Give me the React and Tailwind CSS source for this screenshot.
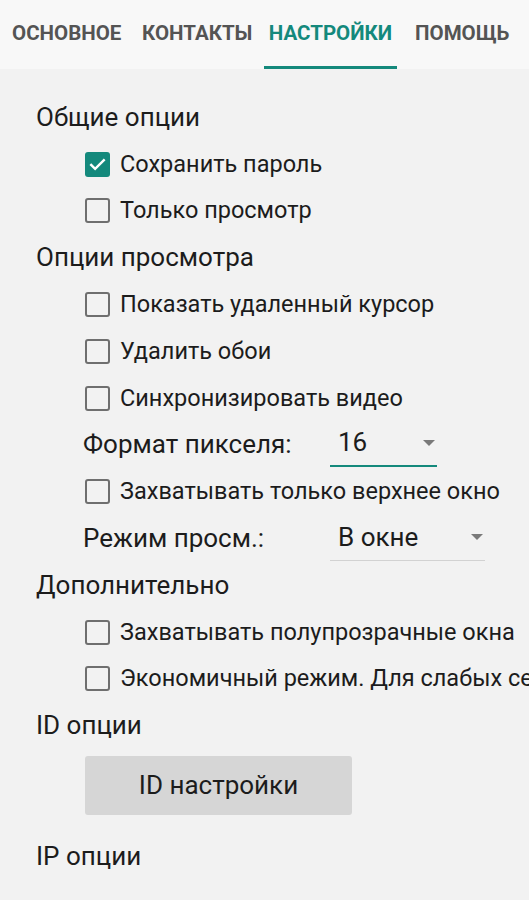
import React from 'react';

function Checkbox({ checked }) {
  if (checked) {
    return (
      <span className="w-[25px] h-[25px] rounded-[3px] bg-[#14897c] flex items-center justify-center shrink-0">
        <svg width="19" height="19" viewBox="0 0 24 24" fill="none" stroke="#fff" strokeWidth="3" strokeLinecap="square">
          <path d="M4 12.5l5 5L20 6.5" />
        </svg>
      </span>
    );
  }
  return <span className="w-[25px] h-[25px] rounded-[3px] border-2 border-[#6f6f6f] shrink-0" />;
}

function Heading({ children }) {
  return (
    <div className="h-[46.8px] flex items-center pl-[36px] text-[26px] text-[#1c1c1c] whitespace-nowrap">{children}</div>
  );
}

function CheckRow({ label, checked }) {
  return (
    <div className="h-[46.8px] flex items-center pl-[85px] gap-[10px] text-[23.5px] text-[#1c1c1c] whitespace-nowrap">
      <Checkbox checked={checked} />
      <span>{label}</span>
    </div>
  );
}

function SelectRow({ label, value, width, active }) {
  return (
    <div className="h-[46.8px] flex items-center pl-[83px] text-[26px] text-[#1c1c1c] whitespace-nowrap">
      <span className="w-[247px]">{label}</span>
      <div
        className={
          'h-[40px] flex items-center justify-between pl-[8px] pr-[2px] mt-[4px] ' +
          (active ? 'border-b-2 border-[#14897c]' : 'border-b border-[#d2d2d2]')
        }
        style={{ width }}
      >
        <span className="-mt-[6px]">{value}</span>
        <svg width="12" height="6" viewBox="0 0 12 6" className="-mt-[6px]">
          <path d="M0 0h12L6 6z" fill="#7a7a7a" />
        </svg>
      </div>
    </div>
  );
}

export default function App() {
  return (
    <div className="w-[529px] h-[900px] overflow-hidden bg-[#f2f2f2]" style={{ fontFamily: 'Roboto, "Noto Sans", sans-serif' }}>
      <div className="h-[69px] bg-[#f8f8f8] flex text-[20.5px] font-bold whitespace-nowrap">
        <div className="w-[142px] pl-[12px] flex items-center pb-[3px] text-[#545454]">ОСНОВНОЕ</div>
        <div className="w-[122px] flex items-center pb-[3px] text-[#545454]">КОНТАКТЫ</div>
        <div className="w-[133px] flex flex-col">
          <div className="flex-1 flex items-center justify-center text-[#14897c]">НАСТРОЙКИ</div>
          <div className="h-[3px] bg-[#14897c]" />
        </div>
        <div className="pl-[18px] flex items-center pb-[3px] text-[#545454]">ПОМОЩЬ</div>
      </div>

      <div className="pt-[25px]">
        <Heading>Общие опции</Heading>
        <CheckRow label="Сохранить пароль" checked />
        <CheckRow label="Только просмотр" />
        <Heading>Опции просмотра</Heading>
        <CheckRow label="Показать удаленный курсор" />
        <CheckRow label="Удалить обои" />
        <CheckRow label="Синхронизировать видео" />
        <SelectRow label="Формат пикселя:" value="16" width={107} active />
        <CheckRow label="Захватывать только верхнее окно" />
        <SelectRow label="Режим просм.:" value="В окне" width={155} />
        <Heading>Дополнительно</Heading>
        <CheckRow label="Захватывать полупрозрачные окна" />
        <CheckRow label="Экономичный режим. Для слабых сетей" />
        <Heading>ID опции</Heading>
        <div className="pl-[85px] mt-[7px]">
          <button className="w-[267px] h-[59px] rounded-[3px] bg-[#d6d6d6] text-[26px] text-[#1c1c1c]">ID настройки</button>
        </div>
        <div className="mt-[18px]">
          <Heading>IP опции</Heading>
        </div>
      </div>
    </div>
  );
}
